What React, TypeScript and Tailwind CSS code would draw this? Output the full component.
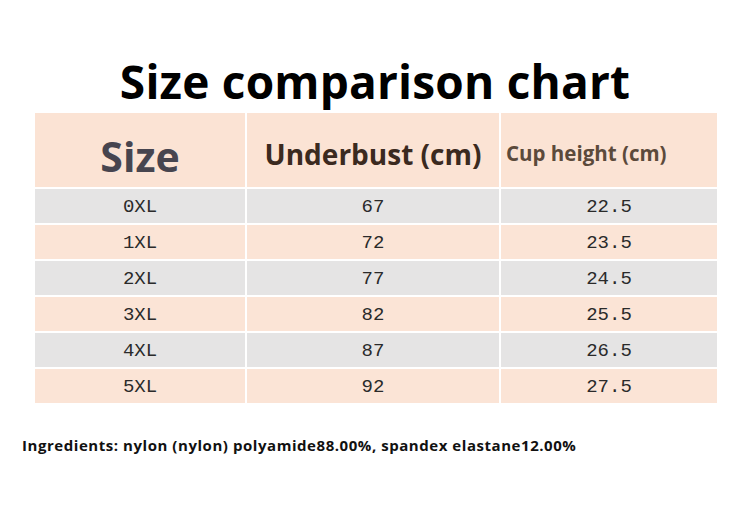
export default function App() {
  const rows = [
    { size: "0XL", under: "67", cup: "22.5", bg: "bg-[#e5e4e4]" },
    { size: "1XL", under: "72", cup: "23.5", bg: "bg-[#fbe4d6]" },
    { size: "2XL", under: "77", cup: "24.5", bg: "bg-[#e5e4e4]" },
    { size: "3XL", under: "82", cup: "25.5", bg: "bg-[#fbe4d6]" },
    { size: "4XL", under: "87", cup: "26.5", bg: "bg-[#e5e4e4]" },
    { size: "5XL", under: "92", cup: "27.5", bg: "bg-[#fbe4d6]" },
  ];

  return (
    <div className="w-[750px] h-[520px] bg-white overflow-hidden" style={{ fontFamily: "'Open Sans', sans-serif" }}>
      <h1 className="pt-[53px] h-[113px] text-center text-[46px] leading-[56px] font-bold text-black tracking-[0.2px]">
        Size comparison chart
      </h1>
      <div className="ml-[35px] w-[682px] flex flex-col gap-[2px]">
        <div className="flex gap-[2px] h-[74px] text-center">
          <div className="w-[210px] bg-[#fbe3d4] flex items-center justify-center text-[41px] font-bold text-[#47454f] pt-[14px]">
            Size
          </div>
          <div className="w-[252px] bg-[#fbe3d4] flex items-center justify-center text-[28px] font-bold text-[#3b2a20] pt-[7px]">
            Underbust (cm)
          </div>
          <div className="flex-1 bg-[#fbe3d4] flex items-center pl-[5px] text-[20.5px] font-bold text-[#5b4a3b] pt-[6px]">
            Cup height (cm)
          </div>
        </div>
        {rows.map((r) => (
          <div key={r.size} className="flex gap-[2px] h-[34px] text-center text-[19px] text-[#2a2a2a]" style={{ fontFamily: "'Liberation Mono', monospace" }}>
            <div className={`w-[210px] ${r.bg} flex items-center justify-center pt-[2px]`}>{r.size}</div>
            <div className={`w-[252px] ${r.bg} flex items-center justify-center pt-[2px]`}>{r.under}</div>
            <div className={`flex-1 ${r.bg} flex items-center justify-center pt-[2px]`}>{r.cup}</div>
          </div>
        ))}
      </div>
      <p className="mt-[31px] ml-[22px] text-[15px] font-bold text-[#111] tracking-[0.55px]">
        Ingredients: nylon (nylon) polyamide88.00%, spandex elastane12.00%
      </p>
    </div>
  );
}
